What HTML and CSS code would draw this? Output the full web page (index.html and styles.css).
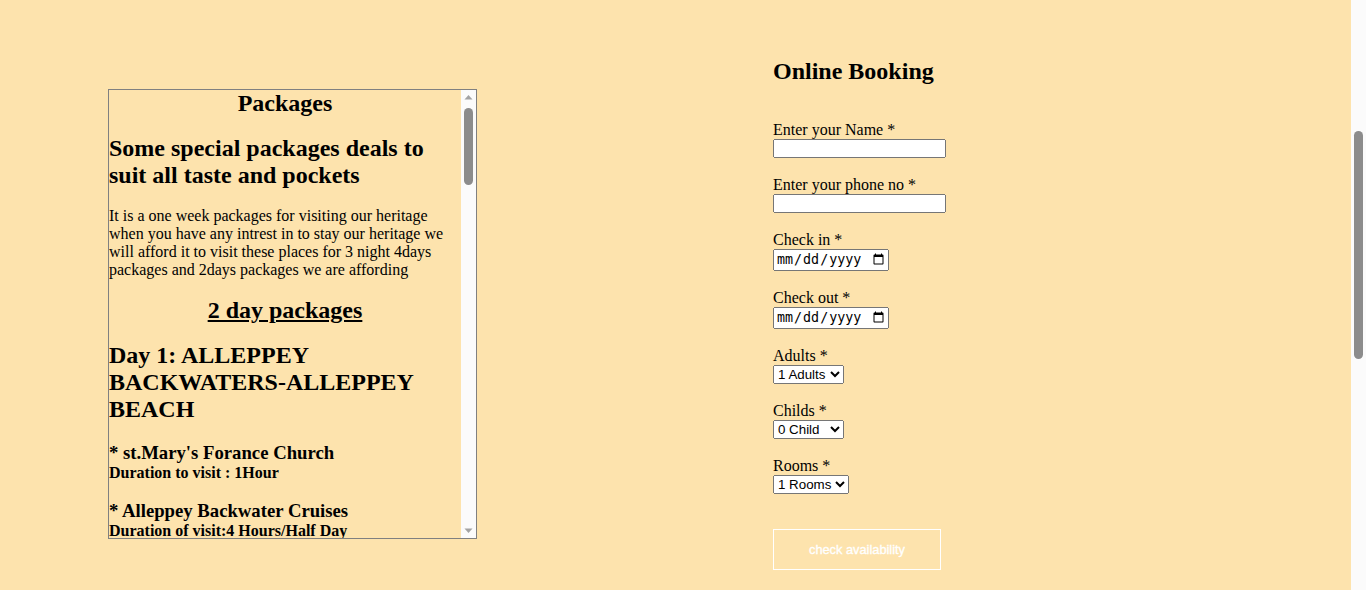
FILE: index.html
```html
<!DOCTYPE html>
<html lang="en">
<head>
<meta charset="utf-8">
<title>Packages and Online Booking</title>
<link rel="stylesheet" href="styles.css">
</head>
<body>
<div class="page">
  <section class="packages">
    <div class="pk-content">
      <h2 class="title">Packages</h2>
      <h2>Some special packages deals to suit all taste and pockets</h2>
      <p>It is a one week packages for visiting our heritage when you have any intrest in to stay our heritage we will afford it to visit these places for 3 night 4days packages and 2days packages we are affording</p>
      <h2 class="center"><u>2 day packages</u></h2>
      <h2>Day 1: ALLEPPEY BACKWATERS-ALLEPPEY BEACH</h2>
      <h3>* st.Mary's Forance Church<br><span class="dur">Duration to visit : 1Hour</span></h3>
      <h3>* Alleppey Backwater Cruises<br><span class="dur">Duration of visit:4 Hours/Half Day</span></h3>
      <h3>* Alleppey Beach<br><span class="dur">Duration of visit:2 Hours</span></h3>
      <h3>* Krishnapuram Palace<br><span class="dur">Duration of visit:1 Hour</span></h3>
      <h2>Day 2: KUMARAKOM BIRD SANCTUARY-VEMBANAD LAKE</h2>
      <h3>* Kumarakom Bird Sanctuary<br><span class="dur">Duration of visit:2 Hours</span></h3>
      <h3>* Vembanad Lake<br><span class="dur">Duration of visit:3 Hours</span></h3>
    </div>
    <div class="pk-bar" aria-hidden="true">
      <svg class="arrow" width="15" height="15" viewBox="0 0 15 15"><path d="M3.5 9.5 L7.5 5 L11.5 9.5 Z" fill="#a3a3a3"/></svg>
      <div class="pk-track"><div class="pk-thumb"></div></div>
      <svg class="arrow" width="15" height="15" viewBox="0 0 15 15"><path d="M3.5 5.5 L7.5 10 L11.5 5.5 Z" fill="#a3a3a3"/></svg>
    </div>
  </section>

  <section class="booking">
    <h2 class="booking-title">Online Booking</h2>
    <form class="form">
      <div class="field">
        <label for="name">Enter your Name *</label>
        <input id="name" type="text" class="text">
      </div>
      <div class="field">
        <label for="phone">Enter your phone no *</label>
        <input id="phone" type="text" class="text">
      </div>
      <div class="field">
        <label for="cin">Check in *</label>
        <input id="cin" type="date" class="date">
      </div>
      <div class="field">
        <label for="cout">Check out *</label>
        <input id="cout" type="date" class="date">
      </div>
      <div class="field">
        <label for="adults">Adults *</label>
        <select id="adults" class="sel">
          <option>1 Adults</option>
          <option>2 Adults</option>
          <option>3 Adults</option>
        </select>
      </div>
      <div class="field">
        <label for="childs">Childs *</label>
        <select id="childs" class="sel">
          <option>0 Child</option>
          <option>1 Childs</option>
          <option>2 Childs</option>
        </select>
      </div>
      <div class="field">
        <label for="rooms">Rooms *</label>
        <select id="rooms" class="sel">
          <option>1 Rooms</option>
          <option>2 Rooms</option>
          <option>3 Rooms</option>
        </select>
      </div>
      <button type="button" class="check">check availability</button>
    </form>
  </section>
</div>
<div class="page-bar" aria-hidden="true"><div class="page-thumb"></div></div>
</body>
</html>
```

FILE: styles.css
```css
html, body {
  margin: 0;
  padding: 0;
}
body {
  background: #fde3ad;
  font-family: "Liberation Serif", "Times New Roman", serif;
  color: #000;
}
.page {
  display: flex;
  align-items: flex-start;
  padding-left: 108px;
}
.packages {
  box-sizing: border-box;
  width: 369px;
  height: 450px;
  margin-top: 89px;
  border: 1px solid #808080;
  display: flex;
  overflow: hidden;
}
.pk-content {
  flex: 1;
  min-width: 0;
  overflow: hidden;
}
.pk-bar {
  width: 15px;
  flex: none;
  background: #fbfbfb;
  display: flex;
  flex-direction: column;
}
.arrow {
  display: block;
  flex: none;
}
.pk-track {
  flex: 1;
  padding-top: 3px;
}
.pk-thumb {
  width: 9px;
  height: 77px;
  margin-left: 3px;
  border-radius: 4.5px;
  background: #8c8c8c;
}
.packages h2 {
  font-size: 24px;
  margin: 18px 0;
}
.packages .title {
  margin-top: 0;
  text-align: center;
}
.packages .center {
  text-align: center;
}
.packages p {
  font-size: 16px;
  margin: 16px 0;
}
.packages h3 {
  font-size: 18.72px;
  line-height: 19px;
  margin: 19.5px 0;
}
.packages .dur {
  font-size: 16px;
}
.booking {
  margin-left: 296px;
  padding-top: 57px;
}
.booking-title {
  font-size: 24px;
  line-height: 28px;
  margin: 0 0 36px 0;
}
.form {
  display: flex;
  flex-direction: column;
  align-items: flex-start;
}
.field {
  display: flex;
  flex-direction: column;
  align-items: flex-start;
  margin-bottom: 18px;
}
.field label {
  font-size: 16px;
  line-height: 18px;
}
.text {
  width: 173px;
  height: 19px;
  box-sizing: border-box;
  margin: 0;
}
.date {
  width: 116px;
  height: 22px;
  box-sizing: border-box;
  margin: 0;
}
.sel {
  height: 19px;
  box-sizing: border-box;
  margin: 0;
}
.check {
  margin-top: 17px;
  width: 168px;
  height: 41px;
  background: transparent;
  border: 1px solid #ffffff;
  color: #ffffff;
  font-family: "Liberation Sans", Arial, sans-serif;
  font-size: 12.8px;
  font-weight: normal;
  -webkit-text-stroke: 0.35px #ffffff;
}
.page-bar {
  position: fixed;
  top: 0;
  right: 0;
  width: 15px;
  height: 100%;
  background: #fbfbfb;
}
.page-thumb {
  width: 9px;
  height: 228px;
  margin: 131px 0 0 3px;
  border-radius: 4.5px;
  background: #8c8c8c;
}
```
